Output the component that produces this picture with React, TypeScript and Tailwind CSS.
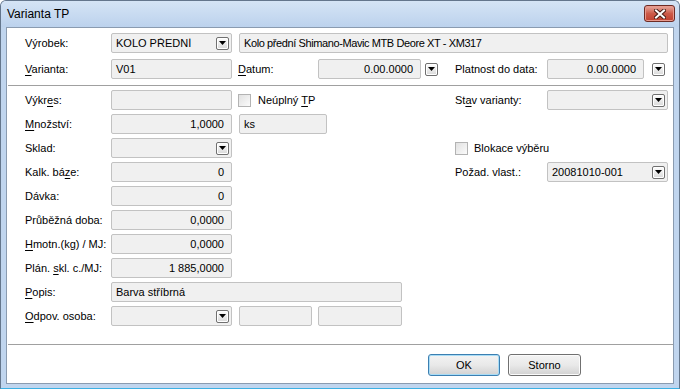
import type { ReactNode } from 'react';

// Underlined access key letter
function U({ children }: { children: ReactNode }) {
  return <span className="underline underline-offset-[2px]">{children}</span>;
}

function Label({ w = 'w-[86px]', className = '', children }: { w?: string; className?: string; children: ReactNode }) {
  return <div className={`${w} ${className} shrink-0 whitespace-nowrap`}>{children}</div>;
}

function DropBtn({ className = '' }: { className?: string }) {
  return (
    <span
      className={`${className} w-[13px] h-[13px] shrink-0 flex items-center justify-center rounded-[2px] border border-[#707070] bg-gradient-to-b from-[#fefefe] to-[#d9d9d9] shadow-[inset_0_0_0_1px_#ffffff]`}
    >
      <svg width="7" height="4" viewBox="0 0 7 4">
        <path d="M0 0h7L3.5 4z" fill="#000" />
      </svg>
    </span>
  );
}

function Box({
  w = 'w-[121px]',
  className = '',
  right = false,
  dd = false,
  children,
}: {
  w?: string;
  className?: string;
  right?: boolean;
  dd?: boolean;
  children?: ReactNode;
}) {
  return (
    <div
      className={`${w} ${className} h-[20px] shrink-0 flex items-center rounded-[2px] border border-[#c2c2c2] bg-[#f0f0f0]`}
    >
      <span
        className={`flex-1 min-w-0 whitespace-nowrap overflow-hidden ${right ? 'text-right pr-[7px]' : 'pl-[4px]'}`}
      >
        {children}
      </span>
      {dd && <DropBtn className="mr-[2px]" />}
    </div>
  );
}

function Check({ className = '' }: { className?: string }) {
  return (
    <span
      className={`${className} w-[13px] h-[13px] shrink-0 border border-[#b3b3b3] bg-gradient-to-br from-[#e1e1e1] to-[#fbfbfb]`}
    />
  );
}

function Row({ children }: { children: ReactNode }) {
  return <div className="h-[20px] flex items-center">{children}</div>;
}

function Button({ primary = false, children }: { primary?: boolean; children: ReactNode }) {
  return (
    <div
      className={`h-[22px] flex items-center justify-center rounded-[3px] border bg-gradient-to-b from-[#f3f3f3] via-[#e9e9e9] to-[#d2d2d2] ${
        primary
          ? 'w-[72px] border-[#3c7fb1] shadow-[inset_0_0_0_1px_#a8dcf6]'
          : 'w-[73px] border-[#707070] shadow-[inset_0_0_0_1px_#fbfbfb]'
      }`}
    >
      {children}
    </div>
  );
}

function CloseBtn() {
  return (
    <div className="self-start mt-[4px] w-[31px] h-[17px] flex items-center justify-center rounded-[3px] border border-[#6d2b24] bg-gradient-to-b from-[#e6a99f] via-[#cc5a49] to-[#c0402f] shadow-[inset_0_0_0_1px_#e89a8e]">
      <svg width="12" height="10" viewBox="0 0 12 10">
        <path d="M2 1.5l8 7M10 1.5l-8 7" stroke="#4a1d17" strokeWidth="4" strokeLinecap="square" />
        <path d="M2 1.5l8 7M10 1.5l-8 7" stroke="#ffffff" strokeWidth="2" strokeLinecap="square" />
      </svg>
    </div>
  );
}

export default function App() {
  return (
    <div className="w-[680px] h-[389px] flex flex-col overflow-hidden rounded-t-[6px] border border-[#64768c] border-b-[#3cb0e4] bg-[#c0d5ee] font-['Liberation_Sans',Arial,sans-serif] text-[11px] leading-none text-black select-none">
      {/* Title bar */}
      <div className="h-[26px] shrink-0 flex items-center justify-between pl-[6px] pr-[4px] bg-gradient-to-b from-[#d5e4f5] to-[#bcd2ed]">
        <span className="text-[12px]">Varianta TP</span>
        <CloseBtn />
      </div>

      {/* Client area */}
      <div className="flex-1 mx-[5px] mb-[4px] flex flex-col border border-[#8a9bb0] bg-white">
        {/* Header rows */}
        <div className="flex flex-col gap-[6px] pl-[18px] pr-[5px] pt-[5px]">
          <Row>
            <Label>Výrobek:</Label>
            <Box dd>KOLO PŘEDNÍ</Box>
            <Box w="flex-1" className="ml-[7px] tracking-[-0.4px]">
              Kolo přední Shimano-Mavic MTB Deore XT - XM317
            </Box>
          </Row>
          <Row>
            <Label>
              <U>V</U>arianta:
            </Label>
            <Box>V01</Box>
            <Label w="w-[80px]" className="ml-[6px]">
              <U>D</U>atum:
            </Label>
            <Box w="w-[103px]" right>
              0.00.0000
            </Box>
            <DropBtn className="ml-[4px]" />
            <Label w="w-[92px]" className="ml-[17px]">
              Platnost do data:
            </Label>
            <Box w="w-[97px]" right>
              0.00.0000
            </Box>
            <DropBtn className="ml-[8px]" />
          </Row>
        </div>

        <div className="mt-[6px] ml-[1px] h-px bg-[#a0a0a0]" />

        {/* Body */}
        <div className="flex pl-[18px] pt-[4px]">
          <div className="w-[430px] flex flex-col gap-[4px]">
            <Row>
              <Label>
                Výkr<U>e</U>s:
              </Label>
              <Box />
              <Check className="ml-[6px]" />
              <span className="ml-[7px]">
                Neúplný <U>T</U>P
              </span>
            </Row>
            <Row>
              <Label>
                <U>M</U>nožství:
              </Label>
              <Box right>1,0000</Box>
              <Box w="w-[88px]" className="ml-[7px]">
                ks
              </Box>
            </Row>
            <Row>
              <Label>Sklad:</Label>
              <Box dd />
            </Row>
            <Row>
              <Label>
                Kalk. bá<U>z</U>e:
              </Label>
              <Box right>0</Box>
            </Row>
            <Row>
              <Label>Dávka:</Label>
              <Box right>0</Box>
            </Row>
            <Row>
              <Label>Průběžná doba:</Label>
              <Box right>0,0000</Box>
            </Row>
            <Row>
              <Label>
                <U>H</U>motn.(kg) / MJ:
              </Label>
              <Box right>0,0000</Box>
            </Row>
            <Row>
              <Label>
                Plán. <U>s</U>kl. c./MJ:
              </Label>
              <Box right>1 885,0000</Box>
            </Row>
            <Row>
              <Label>
                <U>P</U>opis:
              </Label>
              <Box w="w-[291px]">Barva stříbrná</Box>
            </Row>
            <Row>
              <Label>
                <U>O</U>dpov. osoba:
              </Label>
              <Box dd />
              <Box w="w-[73px]" className="ml-[7px]" />
              <Box w="w-[84px]" className="ml-[6px]" />
            </Row>
          </div>

          <div className="flex flex-col gap-[4px]">
            <Row>
              <Label w="w-[92px]">
                St<U>a</U>v varianty:
              </Label>
              <Box dd />
            </Row>
            <Row>
              <span />
            </Row>
            <Row>
              <Check />
              <span className="ml-[6px]">Blokace výběru</span>
            </Row>
            <Row>
              <Label w="w-[92px]">Požad. vlast.:</Label>
              <Box dd>20081010-001</Box>
            </Row>
          </div>
        </div>

        <div className="mt-[18px] ml-[1px] h-px bg-[#a0a0a0]" />

        {/* Buttons */}
        <div className="mt-[9px] flex justify-end gap-[8px] pr-[92px]">
          <Button primary>OK</Button>
          <Button>Storno</Button>
        </div>
      </div>
    </div>
  );
}
